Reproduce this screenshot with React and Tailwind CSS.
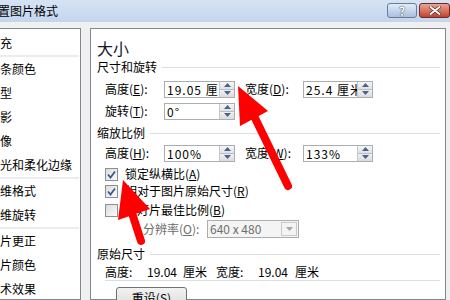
import React from 'react';

const Spinner = () => (
  <div className="flex flex-col w-[15px] h-full border-l border-[#c4c8cf]">
    <div className="flex-1 flex items-center justify-center bg-gradient-to-b from-[#f6f6f6] to-[#dfe2e6] border-b border-[#b8bcc3]">
      <svg width="7" height="4" viewBox="0 0 7 4"><path d="M0 4 L3.5 0 L7 4Z" fill="#4c6387" /></svg>
    </div>
    <div className="flex-1 flex items-center justify-center bg-gradient-to-b from-[#f0f0f0] to-[#d9dce1]">
      <svg width="7" height="4" viewBox="0 0 7 4"><path d="M0 0 L3.5 4 L7 0Z" fill="#4c6387" /></svg>
    </div>
  </div>
);

const NumInput = ({ value, w = 'w-[71px]' }) => (
  <div className={`${w} h-[17px] flex border border-[#abadb3] bg-white`}>
    <div className="flex-1 overflow-hidden whitespace-nowrap pl-[2px] leading-[15px] tracking-[1px]">{value}</div>
    <Spinner />
  </div>
);

const Section = ({ title }) => (
  <div className="flex items-center h-[16px]">
    <span className="leading-[16px]">{title}</span>
    <div className="flex-1 h-px bg-[#d5dfe5] ml-[5px] mr-[5px]" />
  </div>
);

const Check = ({ checked, label }) => (
  <div className="flex items-center h-[16px] ml-[8px]">
    <div className="w-[13px] h-[13px] border border-[#8e8f8f] bg-gradient-to-br from-[#dcdcdc] to-[#fbfbfb] flex items-center justify-center">
      {checked && (
        <svg width="11" height="11" viewBox="0 0 11 11">
          <path d="M2 5.5 L4.5 8.5 L9 2.5" fill="none" stroke="#3b5896" strokeWidth="1.8" />
        </svg>
      )}
    </div>
    <span className="ml-[7px] leading-[16px] whitespace-nowrap">{label}</span>
  </div>
);

const leftItems = [
  ['填充', true],
  ['线条颜色'],
  ['线型'],
  ['阴影'],
  ['映像'],
  ['发光和柔化边缘', true],
  ['三维格式'],
  ['三维旋转', true],
  ['图片更正'],
  ['图片颜色'],
  ['艺术效果'],
];

export default function App() {
  return (
    <div className="relative w-[450px] h-[300px] overflow-hidden bg-[#f0f0f0] text-[12px] text-black font-['Noto_Sans_CJK_SC','Noto_Sans',sans-serif]">
      {/* title bar */}
      <div className="relative h-[22px] flex items-center bg-gradient-to-b from-[#d6e3f4] to-[#c3d5ed]">
        <span className="ml-[-14px] whitespace-nowrap">设置图片格式</span>
        <div className="absolute left-[387px] top-[3px] w-[30px] h-[15px] rounded-[3px] border border-[#6b7b94] bg-gradient-to-b from-[#e3ecf7] to-[#a9bfdf] flex items-center justify-center">
          <span className="font-bold text-[12px] leading-none text-white [text-shadow:0_0_1px_#2d3a52,0_0_1px_#2d3a52]">?</span>
        </div>
        <div className="absolute left-[419px] top-[3px] w-[31px] h-[15px] rounded-[3px] border border-[#6e2a26] bg-gradient-to-b from-[#e7a595] to-[#c2402d] flex items-center justify-center">
          <svg width="12" height="9" viewBox="0 0 12 9">
            <path d="M1.5 1 L10.5 8 M10.5 1 L1.5 8" stroke="#5a1a14" strokeWidth="3.2" strokeLinecap="round" />
            <path d="M1.5 1 L10.5 8 M10.5 1 L1.5 8" stroke="#ffffff" strokeWidth="2" strokeLinecap="round" />
          </svg>
        </div>
      </div>

      <div className="flex pt-[6px] h-[278px]">
        {/* left list */}
        <div className="ml-[-20px] w-[101px] border border-[#828790] bg-white pt-[2px] pl-[7px] overflow-hidden">
          {leftItems.map(([name, sep], i) => (
            <React.Fragment key={i}>
              <div className="h-[24px] leading-[24px] whitespace-nowrap">{name}</div>
              {sep && <div className="h-[2px] bg-[#ebebf2] ml-[-7px] mr-[1px]" />}
            </React.Fragment>
          ))}
        </div>

        {/* right panel */}
        <div className="ml-[9px] w-[356px] border border-[#828790] bg-white pl-[6px]">
          <div className="mt-[9px] h-[20px] leading-[20px] text-[16px] text-[#111827]">大小</div>
          <div className="mt-[1px]"><Section title="尺寸和旋转" /></div>

          <div className="mt-[5px] flex items-center ml-[8px]">
            <span className="w-[59px]">高度(<u>E</u>):</span>
            <NumInput value="19.05 厘米" />
            <span className="ml-[10px] w-[58px]">宽度(<u>D</u>):</span>
            <NumInput value="25.4 厘米" w="w-[70px]" />
          </div>
          <div className="mt-[4px] flex items-center ml-[8px]">
            <span className="w-[59px]">旋转(<u>T</u>):</span>
            <NumInput value="0°" />
          </div>

          <div className="mt-[5px]"><Section title="缩放比例" /></div>
          <div className="mt-[3px] flex items-center ml-[8px]">
            <span className="w-[59px]">高度(<u>H</u>):</span>
            <NumInput value="100%" />
            <span className="ml-[10px] w-[58px]">宽度(<u>W</u>):</span>
            <NumInput value="133%" w="w-[70px]" />
          </div>

          <div className="mt-[4px]"><Check checked label={<>锁定纵横比(<u>A</u>)</>} /></div>
          <div className="mt-[1px]"><Check checked label={<>相对于图片原始尺寸(<u>R</u>)</>} /></div>
          <div className="mt-[3px]"><Check label={<>幻灯片最佳比例(<u>B</u>)</>} /></div>

          <div className="mt-[2px] flex items-center ml-[46px] text-[#6d6d6d]">
            <span className="w-[64px]">分辨率(<u>O</u>):</span>
            <div className="w-[92px] h-[18px] flex border border-[#adadad] bg-[#f4f4f4]">
              <span className="flex-1 pl-[2px] leading-[16px]">640 x 480</span>
              <div className="w-[16px] m-[1px] border border-[#c9c9c9] flex items-center justify-center">
                <svg width="7" height="4" viewBox="0 0 7 4"><path d="M0 0 L3.5 4 L7 0Z" fill="#a6a6a6" /></svg>
              </div>
            </div>
          </div>

          <div className="mt-[8px]"><Section title="原始尺寸" /></div>
          <div className="mt-[2px] h-[17px] flex items-center ml-[8px] mr-[5px] border-b border-[#d5dfe5] whitespace-nowrap">
            <span className="w-[42px]">高度:</span>
            <span className="w-[36px]">19.04</span>
            <span className="w-[33px]">厘米</span>
            <span className="w-[42px]">宽度:</span>
            <span className="w-[37px]">19.04</span>
            <span>厘米</span>
          </div>

          <button className="mt-[6px] ml-[19px] w-[71px] h-[22px] rounded-[3px] border border-[#707070] bg-gradient-to-b from-[#f2f2f2] to-[#dcdcdc] leading-[20px]">
            重设(<u>S</u>)
          </button>
        </div>
      </div>

      {/* red arrows */}
      <svg className="absolute inset-0 pointer-events-none" width="450" height="300" viewBox="0 0 450 300">
        <line x1="255" y1="118" x2="288" y2="186" stroke="#ff0000" strokeWidth="8" strokeLinecap="round" />
        <polygon points="238,86 240,126 268,111" fill="#ff0000" />
        <line x1="131" y1="210" x2="141" y2="241" stroke="#ff0000" strokeWidth="8" strokeLinecap="round" />
        <polygon points="123,180 118,220 150,209" fill="#ff0000" />
      </svg>
    </div>
  );
}
